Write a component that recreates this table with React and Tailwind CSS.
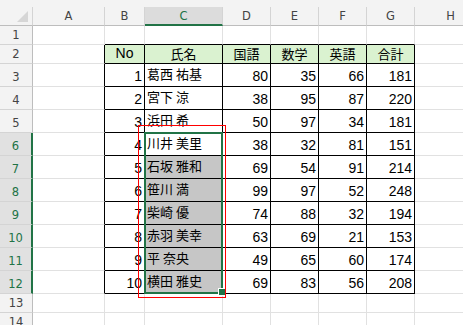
import React from "react";

const COLS = ["A", "B", "C", "D", "E", "F", "G", "H"];
const TABLE_COLS = ["B", "C", "D", "E", "F", "G"];

const HEAD = { B: "No", C: "氏名", D: "国語", E: "数学", F: "英語", G: "合計" };

const students = [
  [1, "葛西 祐基", 80, 35, 66, 181],
  [2, "宮下 涼", 38, 95, 87, 220],
  [3, "浜田 希", 50, 97, 34, 181],
  [4, "川井 美里", 38, 32, 81, 151],
  [5, "石坂 雅和", 69, 54, 91, 214],
  [6, "笹川 満", 99, 97, 52, 248],
  [7, "柴崎 優", 74, 88, 32, 194],
  [8, "赤羽 美幸", 63, 69, 21, 153],
  [9, "平 奈央", 49, 65, 60, 174],
  [10, "横田 雅史", 69, 83, 56, 208],
];

const grid = "grid grid-cols-[33px_72px_40px_78px_48px_48px_48px_48px_72px]";
const latin = { fontFamily: "'Liberation Sans', Arial, sans-serif" };
const cjk = { fontFamily: "'Noto Sans CJK JP', 'Liberation Sans', sans-serif" };
const hdrFont = { fontFamily: "'DejaVu Sans', 'Liberation Sans', sans-serif" };

const Cell = ({ r, c }) => {
  const inTable = r >= 2 && r <= 12 && TABLE_COLS.includes(c);
  const rightBlack = inTable || (c === "A" && r >= 2 && r <= 12);
  const bottomBlack = inTable || (r === 1 && TABLE_COLS.includes(c));
  const selected = c === "C" && r >= 7 && r <= 12;

  let bg = "bg-white";
  if (r === 2 && inTable) bg = "bg-[#daf2d0]";
  if (selected) bg = "bg-[#c6c6c6]";

  const borders = `border-r border-b ${rightBlack ? "border-r-black" : "border-r-[#e1e1e1]"} ${
    bottomBlack ? "border-b-black" : "border-b-[#e1e1e1]"
  }`;

  let content = null;
  if (r === 2 && HEAD[c]) {
    const isNo = c === "B";
    content = (
      <div
        className={`flex h-full items-end justify-center pb-[1px] leading-[17px] text-black ${
          isNo ? "text-[14px]" : "text-[13px]"
        }`}
        style={isNo ? latin : cjk}
      >
        {HEAD[c]}
      </div>
    );
  } else if (r >= 3 && r <= 12) {
    const s = students[r - 3];
    const idx = TABLE_COLS.indexOf(c);
    if (c === "C") {
      content = (
        <div
          className="flex h-full items-end justify-start pl-[2px] pb-[4px] leading-[17px] text-[13px] text-black whitespace-nowrap"
          style={cjk}
        >
          {s[1]}
        </div>
      );
    } else if (idx >= 0) {
      content = (
        <div
          className="flex h-full items-end justify-end pr-[2px] pb-[1px] leading-[17px] text-[14px] text-black"
          style={latin}
        >
          {s[idx]}
        </div>
      );
    }
  }

  return <div className={`${bg} ${borders} overflow-hidden`}>{content}</div>;
};

const RowHeader = ({ r }) => {
  const sel = r >= 6 && r <= 12;
  return (
    <div
      className={`flex items-end justify-center pb-[2px] text-[11.5px] leading-[14px] border-b border-b-[#d4d4d4] ${
        sel
          ? "bg-[#e1e1e1] text-[#217346] border-r-2 border-r-[#217346]"
          : "bg-[#f3f3f3] text-[#444] border-r border-r-[#bdbdbd]"
      }`}
      style={hdrFont}
    >
      {r}
    </div>
  );
};

const Row = ({ r }) => {
  const h = r >= 3 && r <= 12 ? "h-[23px]" : "h-[19px]";
  return (
    <div className={`${grid} ${h}`}>
      <RowHeader r={r} />
      {COLS.map((c) => (
        <Cell key={c} r={r} c={c} />
      ))}
    </div>
  );
};

const ColumnHeaders = () => (
  <div className={`${grid} h-[19px]`}>
    <div className="relative bg-[#f3f3f3] border-r border-b border-r-[#d4d4d4] border-b-[#bdbdbd]">
      <svg className="absolute right-[4px] bottom-[3px]" width="11" height="11" viewBox="0 0 11 11">
        <polygon points="11,0 11,11 0,11" fill="#d6d6d6" />
      </svg>
    </div>
    {COLS.map((c) => {
      const sel = c === "C";
      return (
        <div
          key={c}
          className={`flex items-center justify-center text-[11.5px] leading-[14px] border-r border-r-[#d4d4d4] ${
            sel
              ? "bg-[#dcdcdc] text-[#217346] border-b-2 border-b-[#217346]"
              : "bg-[#f3f3f3] text-[#444] border-b border-b-[#bdbdbd]"
          }`}
          style={hdrFont}
        >
          {c}
        </div>
      );
    })}
  </div>
);

export default function App() {
  const rows = Array.from({ length: 14 }, (_, i) => i + 1);
  return (
    <div className="relative w-[463px] h-[325px] overflow-hidden bg-[#f3f3f3]">
      <div className="h-[7px] bg-[#f3f3f3]" />
      <ColumnHeaders />
      {rows.map((r) => (
        <Row key={r} r={r} />
      ))}

      {/* selection C6:C12 */}
      <div className="absolute left-[144px] top-[132px] w-[79px] h-[162px] border-2 border-[#217346]" />
      <div className="absolute left-[218px] top-[288px] w-[8px] h-[8px] bg-[#217346] border border-white" />

      {/* red marker */}
      <div className="absolute left-[138px] top-[125px] w-[88px] h-[173px] border border-[#ff0000]" />
    </div>
  );
}
